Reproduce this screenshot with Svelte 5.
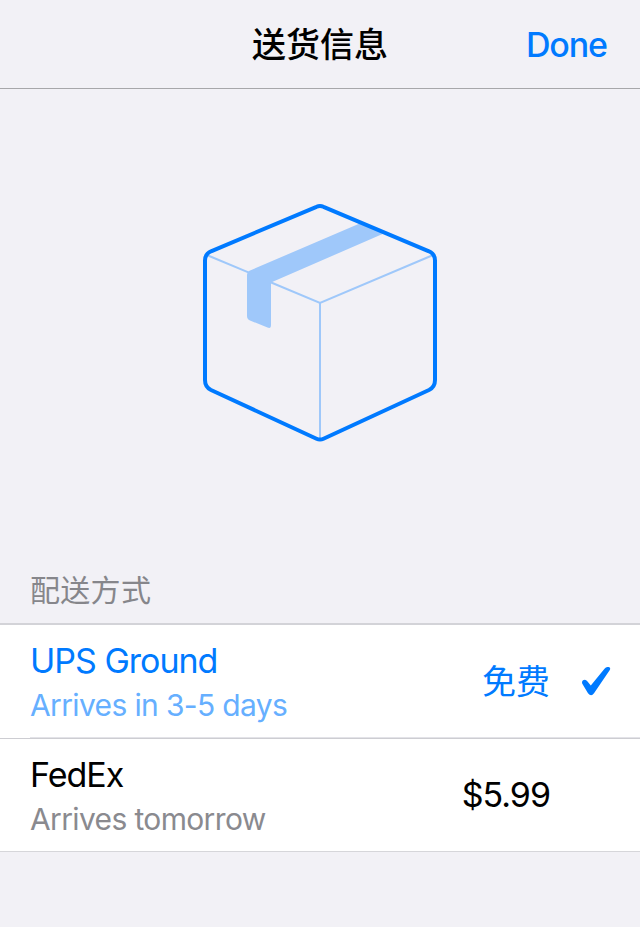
<script>
  const methods = [
    { name: 'UPS Ground', detail: 'Arrives in 3-5 days', price: '免费', selected: true },
    { name: 'FedEx', detail: 'Arrives tomorrow', price: '$5.99', selected: false }
  ];
</script>

<div class="screen">
  <header>
    <h1>送货信息</h1>
    <button class="done">Done</button>
  </header>

  <div class="hero">
    <svg width="240" height="244" viewBox="200 200 240 244" fill="none">
      <path d="M247 275Q247 271.800 249.500 270.700L362 222.500L386 232.500L271 282.500V325Q271 329 267.500 327.500L250 320.500Q247 319.300 247 316Z" fill="#9fc8fa" />
      <g stroke="#9fc8fa" stroke-width="2">
        <path d="M208 255.500L249 272.700M270 282L320 302.800L432 255.500" />
        <path d="M320 302V438" />
      </g>
      <path d="M316.500 206.800Q320 205.200 323.500 206.800L429 251.300Q435 254 435 260.500V380Q435 387 429 390L323.500 438.700Q320 440.500 316.500 438.700L211 390Q205 387 205 380V260.500Q205 254 211 251.300Z" stroke="#007aff" stroke-width="4" stroke-linejoin="round" />
    </svg>
  </div>

  <h2>配送方式</h2>

  <ul>
    {#each methods as method}
      <li class:selected={method.selected}>
        <div class="info">
          <span class="name">{method.name}</span>
          <span class="detail">{method.detail}</span>
        </div>
        <span class="price">{method.price}</span>
        <span class="mark">
          {#if method.selected}
            <svg width="30" height="30" viewBox="581 667 30 30">
              <path d="M582.300 683.700Q581.500 681.500 583 680.300Q585.500 678.700 587.300 681.200L590.800 685.500L604.500 668.700Q606.300 666.700 608.600 667Q611 667.500 609.800 670L594 693.200Q591.200 697.200 588 693.200Z" fill="#007aff" />
            </svg>
          {/if}
        </span>
      </li>
    {/each}
  </ul>
</div>

<style>
  :global(body) {
    margin: 0;
    background: #f2f1f6;
  }
  .screen {
    width: 640px;
    height: 927px;
    overflow: hidden;
    background: #f2f1f6;
    font-family: Inter, "Noto Sans CJK SC", sans-serif;
    color: #000;
  }
  header {
    display: grid;
    grid-template-columns: 1fr auto 1fr;
    align-items: center;
    height: 89px;
    box-sizing: border-box;
    border-bottom: 1px solid #a7a7aa;
  }
  h1 {
    grid-column: 2;
    margin: 0;
    padding-bottom: 2px;
    font: 500 34px/48px "Noto Sans CJK SC", sans-serif;
  }
  .done {
    justify-self: end;
    margin: 1px 33px 0 0;
    padding: 0;
    border: 0;
    background: none;
    color: #007aff;
    font: 500 34px/48px Inter, sans-serif;
    letter-spacing: -1.1px;
  }
  .hero {
    display: flex;
    justify-content: center;
    height: 479px;
    box-sizing: border-box;
    padding-top: 111px;
  }
  h2 {
    height: 55px;
    box-sizing: border-box;
    margin: 0;
    padding: 0 30px;
    color: #86868b;
    font: 400 30px/41px "Noto Sans CJK SC", sans-serif;
    letter-spacing: 0.3px;
  }
  ul {
    margin: 0;
    padding: 0;
    list-style: none;
    border-top: 2px solid #d3d3d8;
    border-bottom: 1px solid #d6d6da;
    background: #fff;
  }
  li {
    display: flex;
    align-items: center;
    height: 113px;
    box-sizing: border-box;
    padding-left: 30px;
  }
  li + li {
    border-top: 1px solid #cdcdd2;
  }
  li.selected {
    background: linear-gradient(#e3e3e8, #e3e3e8) 30px 112px / 610px 1px no-repeat;
  }
  .info {
    display: flex;
    flex: 1;
    flex-direction: column;
  }
  .name {
    font-size: 34px;
    line-height: 46px;
    letter-spacing: -1px;
  }
  .detail {
    color: #8a8a8f;
    font-size: 30px;
    line-height: 42px;
    letter-spacing: -0.64px;
  }
  .price {
    font-size: 34px;
    line-height: 48px;
    letter-spacing: -1px;
  }
  .mark {
    display: flex;
    width: 59px;
    margin-left: 31px;
  }
  .selected .name,
  .selected .price {
    color: #007aff;
  }
  .selected .price {
    letter-spacing: 0;
  }
  li:not(.selected) .info {
    padding-top: 1px;
  }
  .selected .detail {
    color: #66afff;
  }
</style>
